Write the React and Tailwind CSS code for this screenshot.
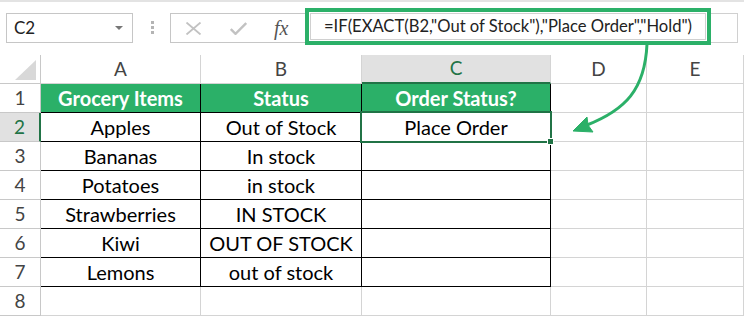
import React from "react";

const rows = [
  ["Grocery Items", "Status", "Order Status?"],
  ["Apples", "Out of Stock", "Place Order"],
  ["Bananas", "In stock", ""],
  ["Potatoes", "in stock", ""],
  ["Strawberries", "IN STOCK", ""],
  ["Kiwi", "OUT OF STOCK", ""],
  ["Lemons", "out of stock", ""],
  ["", "", ""],
];

const colW = ["w-[160px]", "w-[161px]", "w-[189px]"];

function NameBox() {
  return (
    <div className="ml-[6px] mt-[5px] flex h-[30px] w-[127px] items-center justify-between border border-[#c6c6c6] pl-[7px] pr-[9px] text-[17px] text-[#222]">
      <span>C2</span>
      <span className="h-0 w-0 border-x-[4px] border-t-[4px] border-x-transparent border-t-[#777]" />
    </div>
  );
}

function Toolbar() {
  return (
    <div className="flex h-[55px] items-start border-t-2 border-[#e3e3e3] pt-[6px]">
      <NameBox />
      <div className="mt-[13px] flex w-[37px] flex-col items-center gap-[2px] pl-[1px]">
        <span className="h-[3px] w-[3px] bg-[#b4b4b4]" />
        <span className="h-[3px] w-[3px] bg-[#b4b4b4]" />
        <span className="h-[3px] w-[3px] bg-[#b4b4b4]" />
      </div>
      <div className="mt-[5px] flex h-[30px] w-[135px] items-center border-y border-l border-[#c6c6c6] pl-[14px]">
        <svg width="17" height="13" viewBox="0 0 17 13">
          <path d="M1.5 0.5 L15.5 12.5 M15.5 0.5 L1.5 12.5" stroke="#c2c2c2" strokeWidth="1.8" fill="none" />
        </svg>
        <svg className="ml-[28px]" width="17" height="13" viewBox="0 0 17 13">
          <path d="M0.8 7 L5.5 11.8 L16.2 1" stroke="#c2c2c2" strokeWidth="2.4" fill="none" />
        </svg>
        <span className="ml-[27px] font-['Liberation_Serif',serif] text-[20px] italic leading-none text-[#555]">
          fx
        </span>
      </div>
      <div className="h-[37px] w-[406px] border-4 border-[#2bb068] p-[1px]">
        <div className="flex h-full items-center border border-[#d0d0d0] pl-[13px] text-[16.6px] text-[#222]">
          =IF(EXACT(B2,"Out of Stock"),"Place Order","Hold")
        </div>
      </div>
      <div className="mt-[5px] h-[30px] w-[27px] border-y border-r border-[#d0d0d0]" />
    </div>
  );
}

function HeaderRow() {
  return (
    <div className="flex h-[29px] text-[19px] text-[#444]">
      <div className="relative w-[41px] border-r border-b border-[#c8c8c8]">
        <svg className="absolute left-[15px] top-[5px]" width="21" height="20" viewBox="0 0 21 20">
          <path d="M21 0 L21 20 L0 20 Z" fill="#d8d8d8" />
        </svg>
      </div>
      <div className="flex w-[160px] items-center justify-center border-r border-b border-[#d4d4d4]">A</div>
      <div className="flex w-[161px] items-center justify-center border-r border-b border-[#d4d4d4]">B</div>
      <div className="flex w-[189px] items-center justify-center border-r border-b-2 border-r-[#d4d4d4] border-b-[#217346] bg-[#e1e1e1] text-[#217346]">
        C
      </div>
      <div className="flex w-[96px] items-center justify-center border-r border-b border-[#d4d4d4]">D</div>
      <div className="flex w-[97px] items-center justify-center border-r border-b border-[#d4d4d4]">E</div>
    </div>
  );
}

function DataRow({ n, cells }) {
  const inTable = n <= 7;
  const header = n === 1;
  const selectedRow = n === 2;
  return (
    <div className="flex h-[29px] text-[20px]">
      <div
        className={
          selectedRow
            ? "flex w-[41px] items-center justify-center border-r-2 border-b border-r-[#217346] border-b-[#c8c8c8] bg-[#e1e1e1] text-[19px] text-[#217346]"
            : "flex w-[41px] items-center justify-center border-r border-b border-[#c8c8c8] text-[19px] text-[#444]"
        }
      >
        {n}
      </div>
      {cells.map((c, i) => (
        <div
          key={i}
          className={
            colW[i] +
            " flex items-center justify-center border-r border-b " +
            (inTable ? "border-black " : "border-[#d4d4d4] ") +
            (header ? "bg-[#2bb068] font-bold text-white" : "text-black")
          }
        >
          {c}
        </div>
      ))}
      <div className="w-[96px] border-r border-b border-[#d4d4d4]" />
      <div className="w-[97px] border-r border-b border-[#d4d4d4]" />
    </div>
  );
}

export default function App() {
  return (
    <div className="relative h-[316px] w-[744px] overflow-hidden bg-white font-['Lato',sans-serif]">
      <Toolbar />
      <HeaderRow />
      {rows.map((r, i) => (
        <DataRow key={i} n={i + 1} cells={r} />
      ))}

      {/* selected cell C2 */}
      <div className="absolute left-[360px] top-[111px] h-[32px] w-[192px] border-2 border-[#217346]" />
      <div className="absolute left-[547px] top-[138px] h-[7px] w-[7px] border border-white bg-[#217346]" />

      <svg className="pointer-events-none absolute inset-0" width="744" height="316">
        <path d="M647 44 C645 90 625 110 587 125" stroke="#2bb068" strokeWidth="3" fill="none" />
        <path d="M573 131 L587 117 L588 125 L593 132 Z" fill="#2bb068" stroke="#2bb068" strokeWidth="1" strokeLinejoin="round" />
      </svg>
    </div>
  );
}
